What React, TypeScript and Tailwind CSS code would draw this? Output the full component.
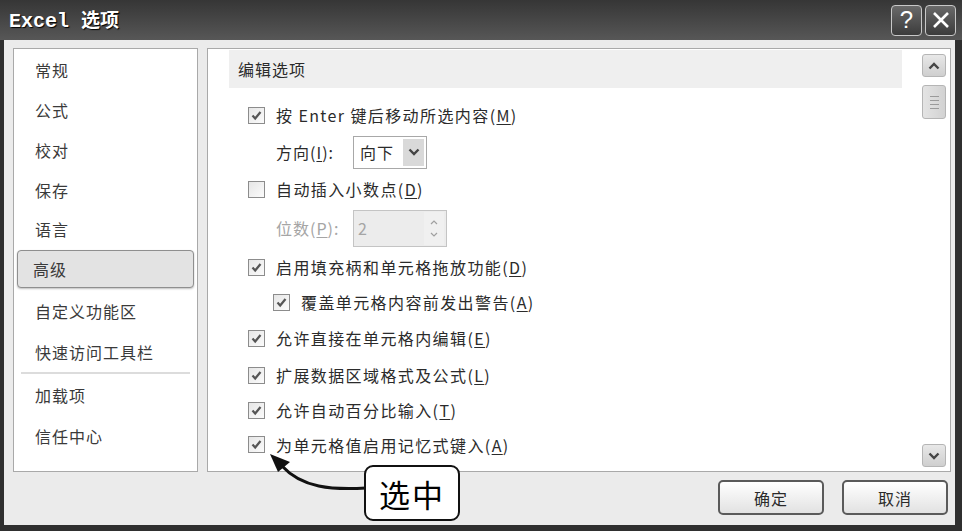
import React from "react";

const cjk = "font-['Noto_Sans_CJK_SC',sans-serif]";

const navItems = ["常规", "公式", "校对", "保存", "语言"];
const navItems2 = ["自定义功能区", "快速访问工具栏"];
const navItems3 = ["加载项", "信任中心"];

const Check: React.FC<{ checked?: boolean }> = ({ checked }) => (
    <span className="w-[17px] h-[17px] shrink-0 border border-[#8c8c8c] bg-gradient-to-br from-[#e6e6e6] to-[#fbfbfb] flex items-center justify-center">
        {checked && (
            <svg width="13" height="13" viewBox="0 0 13 13">
                <path d="M2.5 6.5 L5.2 9.5 L10.5 3" fill="none" stroke="#555" strokeWidth="2.2" />
            </svg>
        )}
    </span>
);

const Key: React.FC<{ k: string }> = ({ k }) => (
    <>
        (<span className="underline underline-offset-2">{k}</span>)
    </>
);

const Row: React.FC<{ h: number; children: React.ReactNode; indent?: boolean }> = ({ h, children, indent }) => (
    <div className={`flex items-center ${indent ? "pl-[44px]" : "pl-[19px]"}`} style={{ height: h }}>
        {children}
    </div>
);

const CheckRow: React.FC<{ h: number; label: string; k: string; indent?: boolean; checked?: boolean }> = ({
    h,
    label,
    k,
    indent,
    checked = true,
}) => (
    <Row h={h} indent={indent}>
        <Check checked={checked} />
        <span className="ml-[11px] text-[16px] tracking-[1.4px] leading-none text-[#2b2b2b]">
            {label}
            <Key k={k} />
        </span>
    </Row>
);

const Chevron: React.FC<{ up?: boolean }> = ({ up }) => (
    <svg width="12" height="8" viewBox="0 0 12 8">
        <path d={up ? "M1.5 6.5 L6 2 L10.5 6.5" : "M1.5 1.5 L6 6 L10.5 1.5"} fill="none" stroke="#444" strokeWidth="2.4" />
    </svg>
);

export default function App() {
    return (
        <div className={`w-[962px] h-[531px] bg-[#2f2f2f] flex flex-col relative overflow-hidden ${cjk}`}>
            {/* TITLE BAR */}
            <div className="h-[40px] shrink-0 bg-gradient-to-b from-[#363636] to-[#575757] flex items-center justify-between pl-[9px] pr-[6px]">
                <span className="text-white text-[19px] font-bold [text-shadow:1px_1px_1px_#000] leading-none flex items-baseline">
                    <span className="font-['Liberation_Mono',monospace] text-[20px]">Excel</span>
                    <span className="ml-[12px]">选项</span>
                </span>
                <div className="flex gap-[3px]">
                    <div className="w-[31px] h-[31px] rounded-[4px] border border-[#c8c8c8] bg-gradient-to-b from-[#6a6a6a] to-[#3c3c3c] flex items-center justify-center text-white text-[24px] leading-none font-['Liberation_Sans',sans-serif]">
                        ?
                    </div>
                    <div className="w-[31px] h-[31px] rounded-[4px] border border-[#c8c8c8] bg-gradient-to-b from-[#6a6a6a] to-[#3c3c3c] flex items-center justify-center">
                        <svg width="20" height="20" viewBox="0 0 20 20">
                            <path d="M3 3 L17 17 M17 3 L3 17" stroke="#fff" strokeWidth="2.6" />
                        </svg>
                    </div>
                </div>
            </div>

            {/* BODY */}
            <div className="flex-1 ml-[4px] mr-[7px] bg-[#ebebeb] flex flex-col pl-[9px] pr-[4px] pt-[8px]">
                <div className="flex gap-[9px] h-[424px]">
                    {/* LEFT NAV */}
                    <div className="w-[185px] bg-white border border-[#a9a9a9] pt-[1px] px-[3px] text-[16px] tracking-[1px] text-[#3a3a3a]">
                        {navItems.map((t, i) => (
                            <div key={t} className="flex items-center pl-[18px]" style={{ height: i < 3 ? 40 : 39 }}>
                                {t}
                            </div>
                        ))}
                        <div className="h-[42px] flex items-center">
                            <div className="w-full h-[38px] rounded-[4px] border border-[#8f8f8f] bg-[#e3e3e3] shadow-[0_1px_2px_rgba(0,0,0,0.25)] flex items-center pl-[15px]">
                                高级
                            </div>
                        </div>
                        {navItems2.map((t) => (
                            <div key={t} className="flex items-center pl-[18px] h-[41px]">
                                {t}
                            </div>
                        ))}
                        <div className="mx-[4px] h-[2px] bg-[#dcdcdc]" />
                        {navItems3.map((t) => (
                            <div key={t} className="flex items-center pl-[18px] h-[41px]">
                                {t}
                            </div>
                        ))}
                    </div>

                    {/* RIGHT CONTENT */}
                    <div className="flex-1 bg-white border border-[#a9a9a9] flex pt-[1px]">
                        <div className="flex-1 pl-[21px] pr-[20px]">
                            <div className="h-[38px] bg-[#efefef] flex items-center pl-[9px] text-[16px] tracking-[1px] text-[#2b2b2b]">
                                编辑选项
                            </div>
                            <div className="pt-[9px]">
                                <CheckRow h={36} label="按 Enter 键后移动所选内容" k="M" />
                                <Row h={38} indent>
                                    <span className="ml-[3px] text-[16px] tracking-[1px] leading-none text-[#2b2b2b] w-[77px]">
                                        方向(<span className="underline underline-offset-2">I</span>):
                                    </span>
                                    <div className="w-[74px] h-[33px] border border-[#a8a8a8] bg-white flex items-center justify-between pl-[6px] pr-[2px]">
                                        <span className="text-[16px] tracking-[1px] leading-none text-[#2b2b2b]">向下</span>
                                        <span className="w-[21px] h-[27px] bg-[#d9d9d9] flex items-center justify-center">
                                            <Chevron />
                                        </span>
                                    </div>
                                </Row>
                                <CheckRow h={36} label="自动插入小数点" k="D" checked={false} />
                                <Row h={42} indent>
                                    <span className="ml-[3px] text-[16px] tracking-[1px] leading-none text-[#a5a5a5] w-[77px]">
                                        位数(<span className="underline underline-offset-2">P</span>):
                                    </span>
                                    <div className="w-[94px] h-[37px] border border-[#c4c4c4] bg-[#ececec] flex items-center justify-between pl-[4px] pr-[2px]">
                                        <span className="text-[16px] leading-none text-[#a5a5a5]">2</span>
                                        <span className="w-[20px] h-[33px] bg-[#f0f0f0] flex flex-col items-center justify-center gap-[7px]">
                                            <svg width="8" height="5" viewBox="0 0 8 5">
                                                <path d="M1 4 L4 1 L7 4" fill="none" stroke="#a0a0a0" strokeWidth="1.2" />
                                            </svg>
                                            <svg width="8" height="5" viewBox="0 0 8 5">
                                                <path d="M1 1 L4 4 L7 1" fill="none" stroke="#a0a0a0" strokeWidth="1.2" />
                                            </svg>
                                        </span>
                                    </div>
                                </Row>
                                <CheckRow h={36} label="启用填充柄和单元格拖放功能" k="D" />
                                <CheckRow h={34} label="覆盖单元格内容前发出警告" k="A" indent />
                                <CheckRow h={38} label="允许直接在单元格内编辑" k="E" />
                                <CheckRow h={36} label="扩展数据区域格式及公式" k="L" />
                                <CheckRow h={34} label="允许自动百分比输入" k="T" />
                                <CheckRow h={35} label="为单元格值启用记忆式键入" k="A" />
                            </div>
                        </div>

                        {/* SCROLLBAR */}
                        <div className="w-[24px] mr-[4px] pt-[4px] flex flex-col">
                            <div className="h-[23px] rounded-[3px] border border-[#b5b5b5] bg-gradient-to-b from-[#e8e8e8] to-[#cfcfcf] flex items-center justify-center">
                                <Chevron up />
                            </div>
                            <div className="mt-[8px] h-[34px] rounded-[3px] border border-[#b5b5b5] bg-gradient-to-r from-[#e4e4e4] to-[#d2d2d2] flex flex-col items-center justify-center gap-[3px]">
                                <span className="w-[9px] h-[1px] bg-[#9a9a9a]" />
                                <span className="w-[9px] h-[1px] bg-[#9a9a9a]" />
                                <span className="w-[9px] h-[1px] bg-[#9a9a9a]" />
                                <span className="w-[9px] h-[1px] bg-[#9a9a9a]" />
                            </div>
                            <div className="flex-1" />
                            <div className="h-[23px] mb-[4px] rounded-[3px] border border-[#b5b5b5] bg-gradient-to-b from-[#e8e8e8] to-[#cfcfcf] flex items-center justify-center">
                                <Chevron />
                            </div>
                        </div>
                    </div>
                </div>

                {/* BUTTONS */}
                <div className="flex justify-end gap-[18px] pt-[8px] mr-[3px]">
                    <div className="w-[106px] h-[35px] rounded-[5px] border-2 border-[#5a5a5a] bg-gradient-to-b from-white to-[#e2e2e2] flex items-center justify-center text-[16px] tracking-[1px] text-[#2b2b2b]">
                        确定
                    </div>
                    <div className="w-[106px] h-[35px] rounded-[5px] border-2 border-[#5a5a5a] bg-gradient-to-b from-white to-[#e2e2e2] flex items-center justify-center text-[16px] tracking-[1px] text-[#2b2b2b]">
                        取消
                    </div>
                </div>
            </div>
            <div className="h-[6px] shrink-0" />

            {/* CALLOUT */}
            <svg className="absolute left-[262px] top-[448px]" width="110" height="50" viewBox="0 0 110 50">
                <path d="M104 40 C 70 42, 40 40, 20 18" fill="none" stroke="#111" strokeWidth="3" />
                <path d="M8 6 L28 14 L16 24 Z" fill="#111" />
            </svg>
            <div className="absolute left-[364px] top-[465px] w-[96px] h-[56px] rounded-[9px] border-2 border-[#111] bg-white flex items-center justify-center text-[31px] text-black leading-none tracking-[2px]">
                选中
            </div>
        </div>
    );
}
